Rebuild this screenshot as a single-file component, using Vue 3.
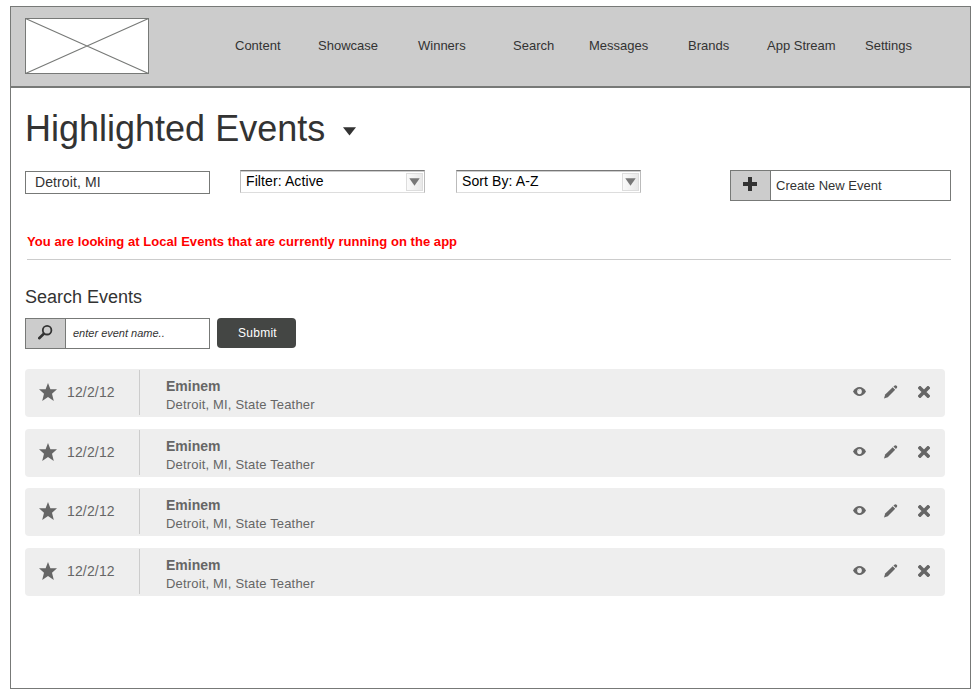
<script setup>
import { ref } from 'vue'

const navItems = ['Content', 'Showcase', 'Winners', 'Search', 'Messages', 'Brands', 'App Stream', 'Settings']
const selects = ['Filter: Active', 'Sort By: A-Z']
const events = ref(
  [1, 2, 3, 4].map((id) => ({ id, date: '12/2/12', name: 'Eminem', place: 'Detroit, MI, State Teather' }))
)
</script>

<template>
  <div class="frame">
    <header class="header">
      <svg class="logo" width="124" height="56" viewBox="0 0 124 56">
        <rect x="0.5" y="0.5" width="123" height="55" fill="#fff" stroke="#777977" />
        <path d="M0.5 0.5 123.5 55.5M123.5 0.5 0.5 55.5" stroke="#777977" stroke-width="1.1" fill="none" />
      </svg>
      <nav class="nav">
        <a v-for="item in navItems" :key="item">{{ item }}</a>
      </nav>
    </header>

    <main class="content">
      <div class="title">
        <h1>Highlighted Events</h1>
        <svg width="13" height="9" viewBox="0 0 13 9"><path d="M0 .3H13L6.5 8.6Z" fill="#333" /></svg>
      </div>

      <div class="controls">
        <div class="location">Detroit, MI</div>
        <div v-for="label in selects" :key="label" class="select">
          <span>{{ label }}</span>
          <i class="drop">
            <svg width="11" height="8" viewBox="0 0 11 8"><path d="M.3 .2H10.7L5.5 7.8Z" fill="#777" /></svg>
          </i>
        </div>
        <div class="box create">
          <i class="box-icon">
            <svg width="14" height="14" viewBox="0 0 14 14"><path d="M5 0H9V5H14V9H9V14H5V9H0V5H5Z" fill="#333" /></svg>
          </i>
          <span>Create New Event</span>
        </div>
      </div>

      <p class="notice">You are looking at Local Events that are currently running on the app</p>

      <h2>Search Events</h2>
      <div class="search">
        <div class="box field">
          <i class="box-icon">
            <svg width="15" height="15" viewBox="0 0 15 15">
              <circle cx="9.1" cy="5.2" r="4.3" fill="none" stroke="#333" stroke-width="1.8" />
              <path d="M5.8 8.8 1.2 13.2" stroke="#333" stroke-width="2.6" stroke-linecap="round" />
            </svg>
          </i>
          <span>enter event name..</span>
        </div>
        <button class="submit">Submit</button>
      </div>

      <ul class="events">
        <li v-for="e in events" :key="e.id" class="event">
          <div class="when">
            <svg width="18" height="18" viewBox="0 0 18 18">
              <path d="M9 0 11.4 6.3H18L13 10.7 14.8 18 9 14 3.2 18 5 10.7 0 6.3H6.6Z" fill="#666" />
            </svg>
            <span>{{ e.date }}</span>
          </div>
          <div class="info">
            <strong>{{ e.name }}</strong>
            <span>{{ e.place }}</span>
          </div>
          <div class="actions">
            <svg width="13" height="9" viewBox="0 0 13 9">
              <path d="M0 4.5C1.5 1.6 4 0 6.5 0S11.5 1.6 13 4.5C11.5 7.4 9 9 6.5 9S1.5 7.4 0 4.5Z" fill="#666" />
              <ellipse cx="6.5" cy="4.5" rx="2.3" ry="2.8" fill="#eee" />
              <path d="M5.4 3.6Q5.5 2.7 6.5 2.5" stroke="#aaa" stroke-width=".7" fill="none" />
            </svg>
            <svg width="14" height="14" viewBox="0 0 14 14">
              <path d="M0 13.5 1.2 9.6 8.7 2.3 11.2 4.8 3.8 12.2Z" fill="#666" />
              <path d="M9.4 1.6 10.8 .5Q11.6-.2 12.6 .8 13.6 1.8 13 2.7L11.9 4.1Z" fill="#666" />
            </svg>
            <svg width="12" height="12" viewBox="0 0 12 12">
              <path d="M2 2 10 10M10 2 2 10" stroke="#666" stroke-width="3.6" stroke-linecap="square" />
            </svg>
          </div>
        </li>
      </ul>
    </main>
  </div>
</template>

<style>
body {
  margin: 0;
  background: #fff;
}
</style>

<style scoped>
* {
  box-sizing: border-box;
}
svg {
  display: block;
  flex: none;
}
i {
  font-style: normal;
}
.frame {
  width: 961px;
  height: 683px;
  margin: 6px 0 0 10px;
  border: 1px solid #777977;
  font-family: "Liberation Sans", Arial, sans-serif;
  font-size: 13px;
  color: #333;
  white-space: nowrap;
  display: flow-root;
}
.header {
  display: flex;
  height: 81px;
  padding: 11px 0 0 14px;
  background: #ccc;
  border-bottom: 2px solid #777977;
}
.nav {
  display: grid;
  grid-template-columns: 83px 100px 95px 76px 99px 79px 98px auto;
  margin: 20px 0 0 86px;
  line-height: 15px;
}
.content {
  width: 940px;
  padding: 20px 0 0 14px;
}
.title {
  display: flex;
  align-items: center;
  height: 41px;
  gap: 18px;
}
h1 {
  margin: 0;
  font-size: 36px;
  line-height: 41px;
  font-weight: 400;
}
.title svg {
  margin-top: 5px;
}
.controls {
  display: flex;
  align-items: flex-start;
  height: 31px;
  margin-top: 21px;
}
.location {
  width: 185px;
  height: 23px;
  margin: 1px 14px 0 0;
  padding-left: 9px;
  border: 1px solid #777977;
  font-size: 14px;
  line-height: 21px;
  letter-spacing: 0.1px;
}
.select {
  display: flex;
  justify-content: space-between;
  width: 185px;
  height: 23px;
  margin-left: 16px;
  padding: 2px 1px 0 5px;
  border: 1px solid #bbb;
  border-top-color: #777;
  border-bottom-color: #ddd;
  box-shadow: inset 0 1px #ccc;
  color: #000;
  font-size: 14px;
  line-height: 17px;
  letter-spacing: 0.1px;
}
.select + .select {
  margin-left: 31px;
}
.drop {
  display: flex;
  align-items: center;
  justify-content: center;
  width: 17px;
  height: 18px;
  border: 1px solid #ddd;
  background: linear-gradient(90deg, #fafafa, #e8e8e8);
}
.box {
  display: flex;
  height: 31px;
  border: 1px solid #777977;
  background: #fff;
}
.box-icon {
  width: 40px;
  padding: 6px 0 0 12px;
  background: #ccc;
  border-right: 1px solid #777977;
}
.create {
  width: 221px;
  margin-left: auto;
}
.create span {
  padding-left: 5px;
  line-height: 29px;
}
.notice {
  height: 26px;
  margin: 33px 0 0 2px;
  border-bottom: 1px solid #ccc;
  color: #f00;
  font-weight: 700;
  line-height: 15px;
  letter-spacing: 0.05px;
}
h2 {
  margin: 27px 0 0;
  font-size: 18px;
  line-height: 20px;
  font-weight: 400;
}
.search {
  display: flex;
  gap: 7px;
  margin-top: 11px;
}
.field {
  width: 185px;
}
.field span {
  padding-left: 7px;
  font-size: 11px;
  font-style: italic;
  line-height: 29px;
}
.submit {
  width: 79px;
  height: 30px;
  padding: 0 0 0 2px;
  border: 0;
  border-radius: 4px;
  background: #444644;
  color: #fff;
  font: 12px/30px "Liberation Sans", Arial, sans-serif;
  letter-spacing: 0.25px;
}
.events {
  margin: 20px 0 0;
  padding: 0;
  list-style: none;
}
.event {
  display: flex;
  width: 920px;
  height: 48px;
  margin-bottom: 12px;
  border-radius: 4px;
  background: #eee;
  color: #666;
}
.event:nth-child(2) {
  margin-bottom: 11px;
}
.when {
  display: flex;
  width: 115px;
  height: 45px;
  margin-top: 1px;
  padding: 13px 0 0 14px;
  gap: 10px;
  border-right: 1px solid #ccc;
  font-size: 14px;
  line-height: 18px;
  letter-spacing: 0.15px;
}
.info {
  display: flex;
  flex-direction: column;
  padding: 8px 0 0 26px;
  line-height: 18px;
}
.info strong {
  font-size: 14px;
}
.info span {
  padding-top: 1px;
  letter-spacing: 0.17px;
}
.actions {
  display: flex;
  align-items: center;
  height: 45px;
  margin-left: auto;
  padding-right: 15px;
}
.actions svg:nth-child(2) {
  margin: 0 20px 0 18px;
}
</style>
